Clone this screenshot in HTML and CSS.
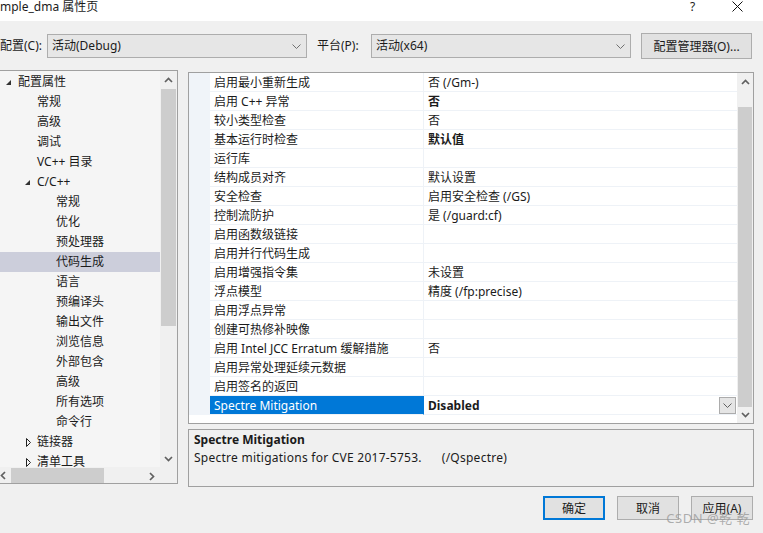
FILE: index.html
```html
<!DOCTYPE html>
<html lang="zh-CN">
<head>
<meta charset="utf-8">
<title>属性页</title>
<link rel="stylesheet" href="styles.css">
</head>
<body>
<div class="window">
  <div class="titlebar">
    <span class="title">mple_dma 属性页</span>
    <span class="tb-help">?</span>
    <span class="tb-close"><svg width="11" height="11" viewBox="0 0 11 11"><path d="M0.5 0.5 L10.5 10.5 M10.5 0.5 L0.5 10.5" stroke="#111" stroke-width="1" fill="none"/></svg></span>
  </div>

  <div class="toolbar">
    <span class="lbl lbl1">配置(C):</span>
    <div class="combo"><span>活动(Debug)</span><svg class="chev" width="9" height="5" viewBox="0 0 9 5"><path d="M0.5 0.5 L4.5 4.5 L8.5 0.5" stroke="#707070" fill="none"/></svg></div>
    <span class="lbl lbl2">平台(P):</span>
    <div class="combo"><span>活动(x64)</span><svg class="chev" width="9" height="5" viewBox="0 0 9 5"><path d="M0.5 0.5 L4.5 4.5 L8.5 0.5" stroke="#707070" fill="none"/></svg></div>
    <div class="btn cfg">配置管理器(O)...</div>
  </div>

  <div class="main">
    <div class="tree-panel">
      <div class="tree-view">
        <div class="tree-rows">
          <div class="node l0"><span class="exp"></span>配置属性</div>
          <div class="node l1"><span class="none"></span>常规</div>
          <div class="node l1"><span class="none"></span>高级</div>
          <div class="node l1"><span class="none"></span>调试</div>
          <div class="node l1"><span class="none"></span>VC++ 目录</div>
          <div class="node l1"><span class="exp"></span>C/C++</div>
          <div class="node l2"><span class="none"></span>常规</div>
          <div class="node l2"><span class="none"></span>优化</div>
          <div class="node l2"><span class="none"></span>预处理器</div>
          <div class="node l2 sel"><span class="none"></span>代码生成</div>
          <div class="node l2"><span class="none"></span>语言</div>
          <div class="node l2"><span class="none"></span>预编译头</div>
          <div class="node l2"><span class="none"></span>输出文件</div>
          <div class="node l2"><span class="none"></span>浏览信息</div>
          <div class="node l2"><span class="none"></span>外部包含</div>
          <div class="node l2"><span class="none"></span>高级</div>
          <div class="node l2"><span class="none"></span>所有选项</div>
          <div class="node l2"><span class="none"></span>命令行</div>
          <div class="node l1"><span class="col"><svg width="5" height="9" viewBox="0 0 5 9"><path d="M0.5 0.5 L4.5 4.5 L0.5 8.5 Z" stroke="#222" fill="none"/></svg></span>链接器</div>
          <div class="node l1"><span class="col"><svg width="5" height="9" viewBox="0 0 5 9"><path d="M0.5 0.5 L4.5 4.5 L0.5 8.5 Z" stroke="#222" fill="none"/></svg></span>清单工具</div>
        </div>
        <div class="vscroll">
          <div class="sb-btn up"><svg width="9" height="6" viewBox="0 0 9 6"><path d="M1 5 L4.5 1.5 L8 5" stroke="#606060" stroke-width="1.7" fill="none"/></svg></div>
          <div class="thumb tree-thumb"></div>
          <div class="sb-fill"></div>
          <div class="sb-btn down"><svg width="9" height="6" viewBox="0 0 9 6"><path d="M1 1 L4.5 4.5 L8 1" stroke="#606060" stroke-width="1.7" fill="none"/></svg></div>
        </div>
      </div>
      <div class="hscroll-row">
        <div class="hscroll">
          <div class="hs-btn left"><svg width="6" height="9" viewBox="0 0 6 9"><path d="M5 1 L1.5 4.5 L5 8" stroke="#606060" stroke-width="1.7" fill="none"/></svg></div>
          <div class="hthumb"></div>
          <div class="sb-fill"></div>
          <div class="hs-btn right"><svg width="6" height="9" viewBox="0 0 6 9"><path d="M1 1 L4.5 4.5 L1 8" stroke="#606060" stroke-width="1.7" fill="none"/></svg></div>
        </div>
        <div class="corner"></div>
      </div>
    </div>

    <div class="right">
      <div class="grid">
        <div class="grid-rows">
          <div class="row"><div class="gut"></div><div class="name">启用最小重新生成</div><div class="val">否 (/Gm-)</div></div>
          <div class="row"><div class="gut"></div><div class="name">启用 C++ 异常</div><div class="val b">否</div></div>
          <div class="row"><div class="gut"></div><div class="name">较小类型检查</div><div class="val">否</div></div>
          <div class="row"><div class="gut"></div><div class="name">基本运行时检查</div><div class="val b">默认值</div></div>
          <div class="row"><div class="gut"></div><div class="name">运行库</div><div class="val"></div></div>
          <div class="row"><div class="gut"></div><div class="name">结构成员对齐</div><div class="val">默认设置</div></div>
          <div class="row"><div class="gut"></div><div class="name">安全检查</div><div class="val">启用安全检查 (/GS)</div></div>
          <div class="row"><div class="gut"></div><div class="name">控制流防护</div><div class="val">是 (/guard:cf)</div></div>
          <div class="row"><div class="gut"></div><div class="name">启用函数级链接</div><div class="val"></div></div>
          <div class="row"><div class="gut"></div><div class="name">启用并行代码生成</div><div class="val"></div></div>
          <div class="row"><div class="gut"></div><div class="name">启用增强指令集</div><div class="val">未设置</div></div>
          <div class="row"><div class="gut"></div><div class="name">浮点模型</div><div class="val">精度 (/fp:precise)</div></div>
          <div class="row"><div class="gut"></div><div class="name">启用浮点异常</div><div class="val"></div></div>
          <div class="row"><div class="gut"></div><div class="name">创建可热修补映像</div><div class="val"></div></div>
          <div class="row"><div class="gut"></div><div class="name">启用 Intel JCC Erratum 缓解措施</div><div class="val">否</div></div>
          <div class="row"><div class="gut"></div><div class="name">启用异常处理延续元数据</div><div class="val"></div></div>
          <div class="row"><div class="gut"></div><div class="name">启用签名的返回</div><div class="val"></div></div>
          <div class="row sel"><div class="gut"></div><div class="name">Spectre Mitigation</div><div class="val b"><span class="val-text">Disabled</span><span class="dd"><svg width="9" height="5" viewBox="0 0 9 5"><path d="M0.5 0.5 L4.5 4.5 L8.5 0.5" stroke="#606060" fill="none"/></svg></span></div></div>
        </div>
        <div class="vscroll grid-scroll">
          <div class="sb-btn up"><svg width="9" height="6" viewBox="0 0 9 6"><path d="M1 5 L4.5 1.5 L8 5" stroke="#606060" stroke-width="1.7" fill="none"/></svg></div>
          <div class="sb-gap"></div>
          <div class="thumb grid-thumb"></div>
          <div class="sb-btn down"><svg width="9" height="6" viewBox="0 0 9 6"><path d="M1 1 L4.5 4.5 L8 1" stroke="#606060" stroke-width="1.7" fill="none"/></svg></div>
        </div>
      </div>
      <div class="desc">
        <div class="desc-title">Spectre Mitigation</div>
        <div class="desc-text">Spectre mitigations for CVE 2017-5753.<span class="switch">(/Qspectre)</span></div>
      </div>
    </div>
  </div>

  <div class="buttons">
    <div class="btn dlg default">确定</div>
    <div class="btn dlg">取消</div>
    <div class="btn dlg">应用(A)</div>
  </div>
  <div class="watermark">CSDN @乾 乾</div>
</div>
</body>
</html>
```
FILE: styles.css
```css
* { box-sizing: border-box; }
html, body { margin: 0; padding: 0; }
body {
  width: 763px;
  height: 533px;
  overflow: hidden;
  background: #f0f0f0;
  font-family: "Noto Sans", "Noto Sans CJK SC", sans-serif;
  font-size: 12px;
  color: #1b1b1b;
}
.window {
  position: relative;
  width: 763px;
  height: 533px;
}

/* title bar */
.titlebar {
  height: 21px;
  background: #ffffff;
  display: flex;
  align-items: flex-start;
}
.title {
  line-height: 14px;
  flex: 1;
}
.tb-help {
  line-height: 14px;
  width: 12px;
  margin-right: 30px;
  font-size: 12px;
}
.tb-close {
  margin-top: 1px;
  margin-right: 20px;
  display: flex;
}

/* toolbar */
.toolbar {
  display: flex;
  align-items: center;
  height: 26px;
  margin-top: 12px;
}
.lbl { line-height: 16px; }
.lbl1 { width: 47px; }
.lbl2 { width: 54px; margin-left: 10px; }
.combo {
  width: 260px;
  height: 24px;
  border: 1px solid #adadad;
  background: #e6e6e6;
  display: flex;
  align-items: center;
  padding: 0 5px 0 4px;
}
.combo span { flex: 1; line-height: 16px; }
.btn {
  background: #e1e1e1;
  border: 1px solid #adadad;
  display: flex;
  align-items: center;
  justify-content: center;
}
.cfg {
  width: 111px;
  height: 26px;
  margin-left: 10px;
}

/* main */
.main {
  display: flex;
  margin-top: 11px;
  height: 417px;
}
.tree-panel {
  width: 178px;
  height: 414px;
  border: 1px solid #a0a0a0;
  border-left: none;
  background: #f5f5f5;
  display: flex;
  flex-direction: column;
}
.tree-view {
  display: flex;
  height: 396px;
}
.tree-rows {
  width: 160px;
  padding-top: 1px;
  overflow: hidden;
}
.node {
  height: 20px;
  display: flex;
  align-items: center;
  white-space: nowrap;
  line-height: 16px;
}
.node.sel { background: #cccedb; }
.node > span {
  width: 12px;
  height: 20px;
  display: flex;
  align-items: center;
  justify-content: flex-start;
}
.l0 { padding-left: 6px; }
.l1 { padding-left: 25px; }
.l2 { padding-left: 44px; }
.exp::before {
  content: "";
  width: 0;
  height: 0;
  border-left: 5px solid transparent;
  border-bottom: 5px solid #333;
  margin-top: 1px;
}
.col svg { margin-left: 1px; }

.vscroll {
  width: 17px;
  background: #f0f0f0;
  display: flex;
  flex-direction: column;
}
.sb-btn {
  height: 17px;
  display: flex;
  align-items: center;
  justify-content: center;
  flex: none;
}
.thumb {
  background: #cdcdcd;
  margin: 0 1px;
  flex: none;
}
.tree-thumb { height: 237px; margin-top: 1px; }
.sb-fill { flex: 1; }
.hscroll-row {
  display: flex;
  height: 16px;
}
.hscroll {
  width: 160px;
  background: #f0f0f0;
  display: flex;
  align-items: center;
}
.hs-btn {
  height: 16px;
  display: flex;
  align-items: center;
}
.hs-btn.left { width: 11px; }
.hs-btn.right { width: 17px; justify-content: center; }
.hthumb {
  width: 93px;
  height: 15px;
  background: #cdcdcd;
}
.corner { width: 17px; background: #f0f0f0; }

/* right column */
.right {
  margin-left: 10px;
  margin-top: 2px;
  width: 566px;
  display: flex;
  flex-direction: column;
}
.grid {
  height: 352px;
  border: 1px solid #a0a0a0;
  background: #ffffff;
  display: flex;
}
.grid-rows {
  width: 548px;
}
.row {
  display: flex;
  height: 19px;
}
.gut {
  width: 21px;
  background: #f0f4f9;
}
.name, .val {
  border-bottom: 1px solid #eef2f7;
  line-height: 16px;
  padding-top: 2px;
  white-space: nowrap;
  overflow: hidden;
  padding-left: 4px;
}
.name {
  width: 214px;
  border-right: 1px solid #eef2f7;
}
.val {
  width: 313px;
  display: flex;
  align-items: flex-start;
}
.val.b { font-weight: bold; }
.row.sel .name {
  background: #0078d7;
  color: #ffffff;
  border-right-color: #0078d7;
}
.row.sel .val { padding-top: 0; align-items: center; }
.val-text { flex: 1; padding-top: 2px; }
.dd {
  width: 17px;
  height: 17px;
  background: #e5e5e5;
  border: 1px solid #acacac;
  display: flex;
  align-items: center;
  justify-content: center;
  margin-right: 1px;
}
.grid-scroll { width: 16px; }
.sb-gap { height: 17px; flex: none; }
.grid-thumb { height: 300px; }
.grid-scroll .down { height: 16px; }

.desc {
  margin-top: 5px;
  height: 59px;
  border: 1px solid #a0a0a0;
  padding: 1px 5px;
}
.desc-title { font-weight: bold; line-height: 18px; }
.desc-text { line-height: 18px; letter-spacing: 0.25px; }
.switch { margin-left: 20px; }

.buttons {
  display: flex;
  justify-content: flex-end;
  gap: 12px;
  margin-top: 9px;
  padding-right: 10px;
}
.dlg {
  width: 62px;
  height: 24px;
}
.dlg.default {
  border: 2px solid #0078d7;
}
.watermark {
  position: absolute;
  right: 13px;
  top: 510px;
  color: rgba(150, 150, 150, 0.75);
  font-size: 13px;
  line-height: 16px;
  letter-spacing: 0.5px;
}
```
